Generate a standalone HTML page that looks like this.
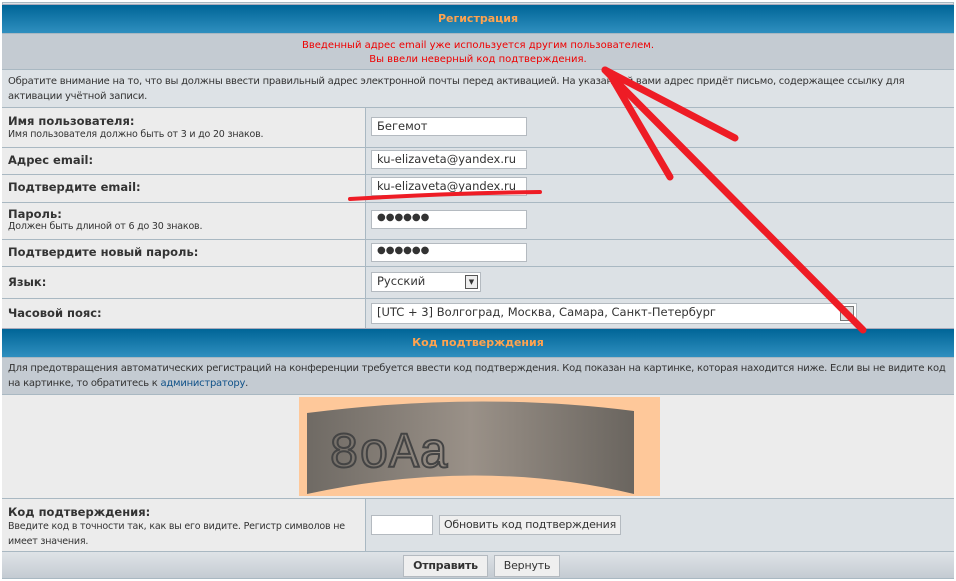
<!DOCTYPE html>
<html><head><meta charset="utf-8"><style>
*{margin:0;padding:0;box-sizing:border-box}
body{width:956px;height:581px;background:#fff;font-family:"DejaVu Sans","Liberation Sans",sans-serif;font-size:11px;color:#333;position:relative;overflow:hidden}
.a{position:absolute}
.hd{left:2px;width:952px;background:linear-gradient(#006597,#2f8fbf);color:#ffa34f;font-weight:bold;font-size:11px;text-align:center;border-top:1px solid #aab}
.row{left:2px;width:952px;border-top:1px solid #a9b8c2}
.l{position:absolute;left:0;top:0;bottom:0;width:364px;background:#ececec;border-right:1px solid #a9b8c2;padding:0 6px}
.r{position:absolute;left:364px;right:0;top:0;bottom:0;background:#dce1e5}
.lab{font-weight:bold;font-size:11.5px;color:#333}
.sm{font-size:9.5px;color:#333;letter-spacing:-0.2px}
.inp{position:absolute;left:5px;height:19px;width:156px;background:#fff;border:1px solid #b4bac0;font-size:11.5px;padding:1px 5px;color:#333;white-space:nowrap}
.btn{position:absolute;background:#efefef;border:1px solid #b4bac0;font-size:11px;text-align:center;color:#333;white-space:nowrap;letter-spacing:-0.2px}
</style></head><body>
<div class="a" style="left:2px;top:2px;width:952px;height:577px;border:1px solid #a9b8c2;background:#dce1e5"></div>
<div class="a hd" style="top:4px;height:29px;line-height:28px">Регистрация</div>
<div class="a row" style="top:33px;height:36px;background:#c4cbd2;color:#e00;text-align:center;font-size:10px;line-height:14px;padding-top:5px">Введенный адрес email уже используется другим пользователем.<br>Вы ввели неверный код подтверждения.</div>
<div class="a row" style="top:69px;height:38px;background:#dde2e6;font-size:10px;line-height:15px;padding:4px 6px;letter-spacing:-0.25px">Обратите внимание на то, что вы должны ввести правильный адрес электронной почты перед активацией. На указанный вами адрес придёт письмо, содержащее ссылку для активации учётной записи.</div>

<div class="a row" style="top:107px;height:40px"><div class="l"><div class="lab" style="margin-top:6px">Имя пользователя:</div><div class="sm" style="margin-top:1px">Имя пользователя должно быть от 3 и до 20 знаков.</div></div><div class="r"><div class="inp" style="top:9px">Бегемот</div></div></div>
<div class="a row" style="top:147px;height:27px"><div class="l"><div class="lab" style="line-height:25px">Адрес email:</div></div><div class="r"><div class="inp" style="top:2px">ku-elizaveta@yandex.ru</div></div></div>
<div class="a row" style="top:174px;height:28px"><div class="l"><div class="lab" style="line-height:25px">Подтвердите email:</div></div><div class="r"><div class="inp" style="top:2px">ku-elizaveta@yandex.ru</div></div></div>
<div class="a row" style="top:202px;height:37px"><div class="l"><div class="lab" style="margin-top:4px">Пароль:</div><div class="sm">Должен быть длиной от 6 до 30 знаков.</div></div><div class="r"><div class="inp" style="top:7px;font-size:10px">●●●●●●</div></div></div>
<div class="a row" style="top:239px;height:27px"><div class="l"><div class="lab" style="line-height:25px">Подтвердите новый пароль:</div></div><div class="r"><div class="inp" style="top:3px;font-size:10px">●●●●●●</div></div></div>
<div class="a row" style="top:266px;height:32px"><div class="l"><div class="lab" style="line-height:31px">Язык:</div></div><div class="r"><div class="inp" style="top:5px;width:110px;height:20px">Русский<span style="position:absolute;right:2px;top:2px;width:13px;height:14px;border:1px solid #555;background:#eee;font-size:7px;text-align:center;line-height:12px">▼</span></div></div></div>
<div class="a row" style="top:298px;height:30px"><div class="l"><div class="lab" style="line-height:29px">Часовой пояс:</div></div><div class="r"><div class="inp" style="top:4px;width:486px;height:21px">[UTC + 3] Волгоград, Москва, Самара, Санкт-Петербург<span style="position:absolute;right:2px;top:2px;width:14px;height:15px;border:1px solid #777;background:#ddd"></span></div></div></div>

<div class="a hd" style="top:328px;height:29px;line-height:28px">Код подтверждения</div>
<div class="a row" style="top:357px;height:37px;background:#c4cbd2;font-size:10px;line-height:15px;padding:3px 6px;letter-spacing:-0.25px">Для предотвращения автоматических регистраций на конференции требуется ввести код подтверждения. Код показан на картинке, которая находится ниже. Если вы не видите код на картинке, то обратитесь к <span style="color:#105289">администратору</span>.</div>
<div class="a row" style="top:394px;height:104px;background:#ececec">
<svg class="a" style="left:297px;top:2px" width="361" height="99"><rect width="361" height="99" fill="#fec89a"/><defs><linearGradient id="g" x1="0" x2="1"><stop offset="0" stop-color="#6f6a64"/><stop offset="0.5" stop-color="#9a9188"/><stop offset="1" stop-color="#6a655f"/></linearGradient></defs><path d="M8 16 Q180 -6 335 14 L335 97 Q180 60 8 97Z" fill="url(#g)"/>
<text x="30" y="70" font-family="Liberation Mono" font-size="50" fill="none" stroke="#444" stroke-width="2">8оАа</text></svg>
</div>
<div class="a row" style="top:498px;height:53px"><div class="l" style="width:364px"><div class="lab" style="margin-top:6px">Код подтверждения:</div><div class="sm" style="line-height:15px">Введите код в точности так, как вы его видите. Регистр символов не имеет значения.</div></div><div class="r"><div class="inp" style="top:16px;width:62px;height:20px"></div><div class="btn" style="left:73px;top:16px;width:182px;height:20px;line-height:18px">Обновить код подтверждения</div></div></div>
<div class="a row" style="top:551px;height:27px;background:linear-gradient(#dfe3e7,#c4cbd2)">
<div class="btn" style="left:401px;top:3px;width:85px;height:22px;line-height:20px;font-weight:bold">Отправить</div>
<div class="btn" style="left:492px;top:3px;width:66px;height:22px;line-height:20px">Вернуть</div></div>

<svg class="a" style="left:0;top:0" width="956" height="581"><g stroke="#ee1c25" stroke-width="7" stroke-linecap="round" fill="none">
<path d="M863 330 L605 70"/><path d="M605 70 L735 138"/><path d="M612 78 L670 177"/><path d="M350 199 Q450 193 540 192" stroke-width="4"/></g></svg>
</body></html>
